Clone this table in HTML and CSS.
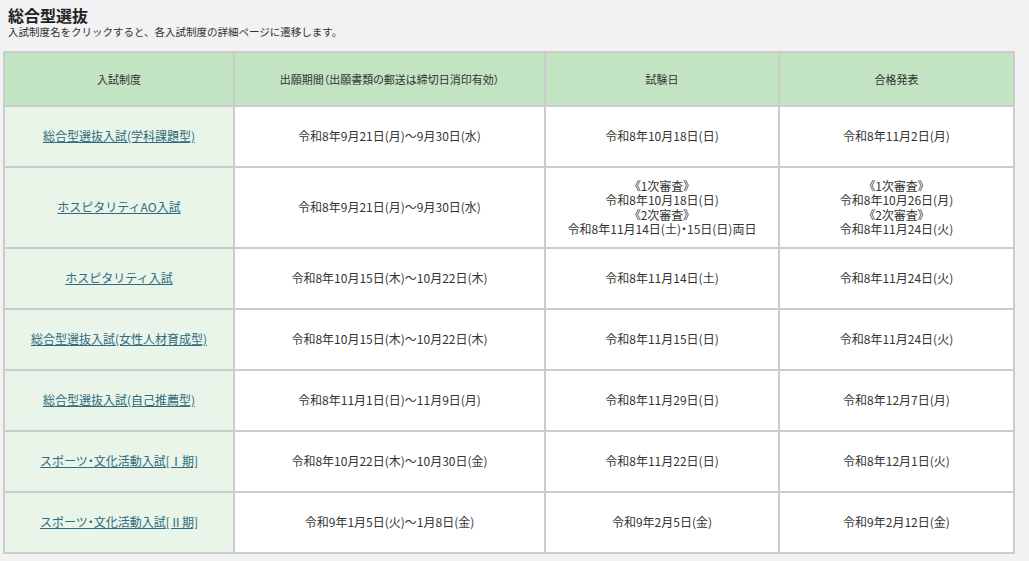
FILE: index.html
```html
<!DOCTYPE html>
<html lang="ja">
<head>
<meta charset="utf-8">
<title>総合型選抜</title>
<link rel="stylesheet" href="styles.css">
</head>
<body>
<div class="intro">
  <h2 class="title">総合型選抜</h2>
  <p class="lead">入試制度名をクリックすると、各入試制度の詳細ページに遷移します。</p>
</div>
<table class="schedule">
  <thead>
    <tr class="head-row">
      <th class="c1">入試制度</th>
      <th class="c2">出願期間（出願書類の郵送は締切日消印有効）</th>
      <th class="c3">試験日</th>
      <th class="c4">合格発表</th>
    </tr>
  </thead>
  <tbody>
    <tr>
      <td class="name"><a href="#">総合型選抜入試(学科課題型)</a></td>
      <td>令和8年9月21日(月)～9月30日(水)</td>
      <td>令和8年10月18日(日)</td>
      <td>令和8年11月2日(月)</td>
    </tr>
    <tr class="tall">
      <td class="name"><a href="#">ホスピタリティAO入試</a></td>
      <td>令和8年9月21日(月)～9月30日(水)</td>
      <td>《1次審査》<br>令和8年10月18日(日)<br>《2次審査》<br>令和8年11月14日(土)・15日(日)両日</td>
      <td>《1次審査》<br>令和8年10月26日(月)<br>《2次審査》<br>令和8年11月24日(火)</td>
    </tr>
    <tr>
      <td class="name"><a href="#">ホスピタリティ入試</a></td>
      <td>令和8年10月15日(木)～10月22日(木)</td>
      <td>令和8年11月14日(土)</td>
      <td>令和8年11月24日(火)</td>
    </tr>
    <tr>
      <td class="name"><a href="#">総合型選抜入試(女性人材育成型)</a></td>
      <td>令和8年10月15日(木)～10月22日(木)</td>
      <td>令和8年11月15日(日)</td>
      <td>令和8年11月24日(火)</td>
    </tr>
    <tr>
      <td class="name"><a href="#">総合型選抜入試(自己推薦型)</a></td>
      <td>令和8年11月1日(日)～11月9日(月)</td>
      <td>令和8年11月29日(日)</td>
      <td>令和8年12月7日(月)</td>
    </tr>
    <tr>
      <td class="name"><a href="#">スポーツ<span class="pp">・</span>文化活動入試[Ⅰ期]</a></td>
      <td>令和8年10月22日(木)～10月30日(金)</td>
      <td>令和8年11月22日(日)</td>
      <td>令和8年12月1日(火)</td>
    </tr>
    <tr>
      <td class="name"><a href="#">スポーツ<span class="pp">・</span>文化活動入試[Ⅱ期]</a></td>
      <td>令和9年1月5日(火)～1月8日(金)</td>
      <td>令和9年2月5日(金)</td>
      <td>令和9年2月12日(金)</td>
    </tr>
  </tbody>
</table>
</body>
</html>
```
FILE: styles.css
```css
html, body {
  margin: 0;
  padding: 0;
  background: #f2f2f2;
}
body {
  font-family: "Noto Sans CJK JP", "Noto Sans", sans-serif;
  color: #333;
  font-size: 12px;
}
.intro {
  padding: 5px 8px 0 8px;
  height: 51px;
  box-sizing: border-box;
}
.title {
  margin: 0;
  font-size: 16px;
  font-weight: bold;
  line-height: 20px;
  color: #222;
}
.lead {
  margin: 0;
  font-size: 10.5px;
  line-height: 14px;
  color: #333;
}
.schedule {
  margin-left: 3px;
  border-collapse: separate;
  border-spacing: 0;
  border-left: 2px solid #cccccc;
  border-top: 2px solid #cccccc;
  table-layout: fixed;
  width: 1012px;
  box-sizing: border-box;
}
.schedule th,
.schedule td {
  box-sizing: border-box;
  border-right: 2px solid #cccccc;
  border-bottom: 2px solid #cccccc;
  padding: 0 4px;
  text-align: center;
  vertical-align: middle;
  font-size: 12px;
  line-height: 14.5px;
  font-weight: normal;
  background: #ffffff;
  height: 61px;
  font-feature-settings: "palt";
}
.schedule td.name {
  background: #e8f5e8;
  font-feature-settings: normal;
}
.pp {
  font-feature-settings: "palt";
}
.schedule .head-row th {
  background: #c2e4c2;
  height: 54px;
  font-size: 11px;
}
.schedule tr.tall td {
  height: 81px;
}
.c1 { width: 230px; }
.c2 { width: 311px; }
.c3 { width: 234px; }
.c4 { width: 235px; }
.name a {
  color: #2f6b80;
  text-decoration: underline;
}
```
